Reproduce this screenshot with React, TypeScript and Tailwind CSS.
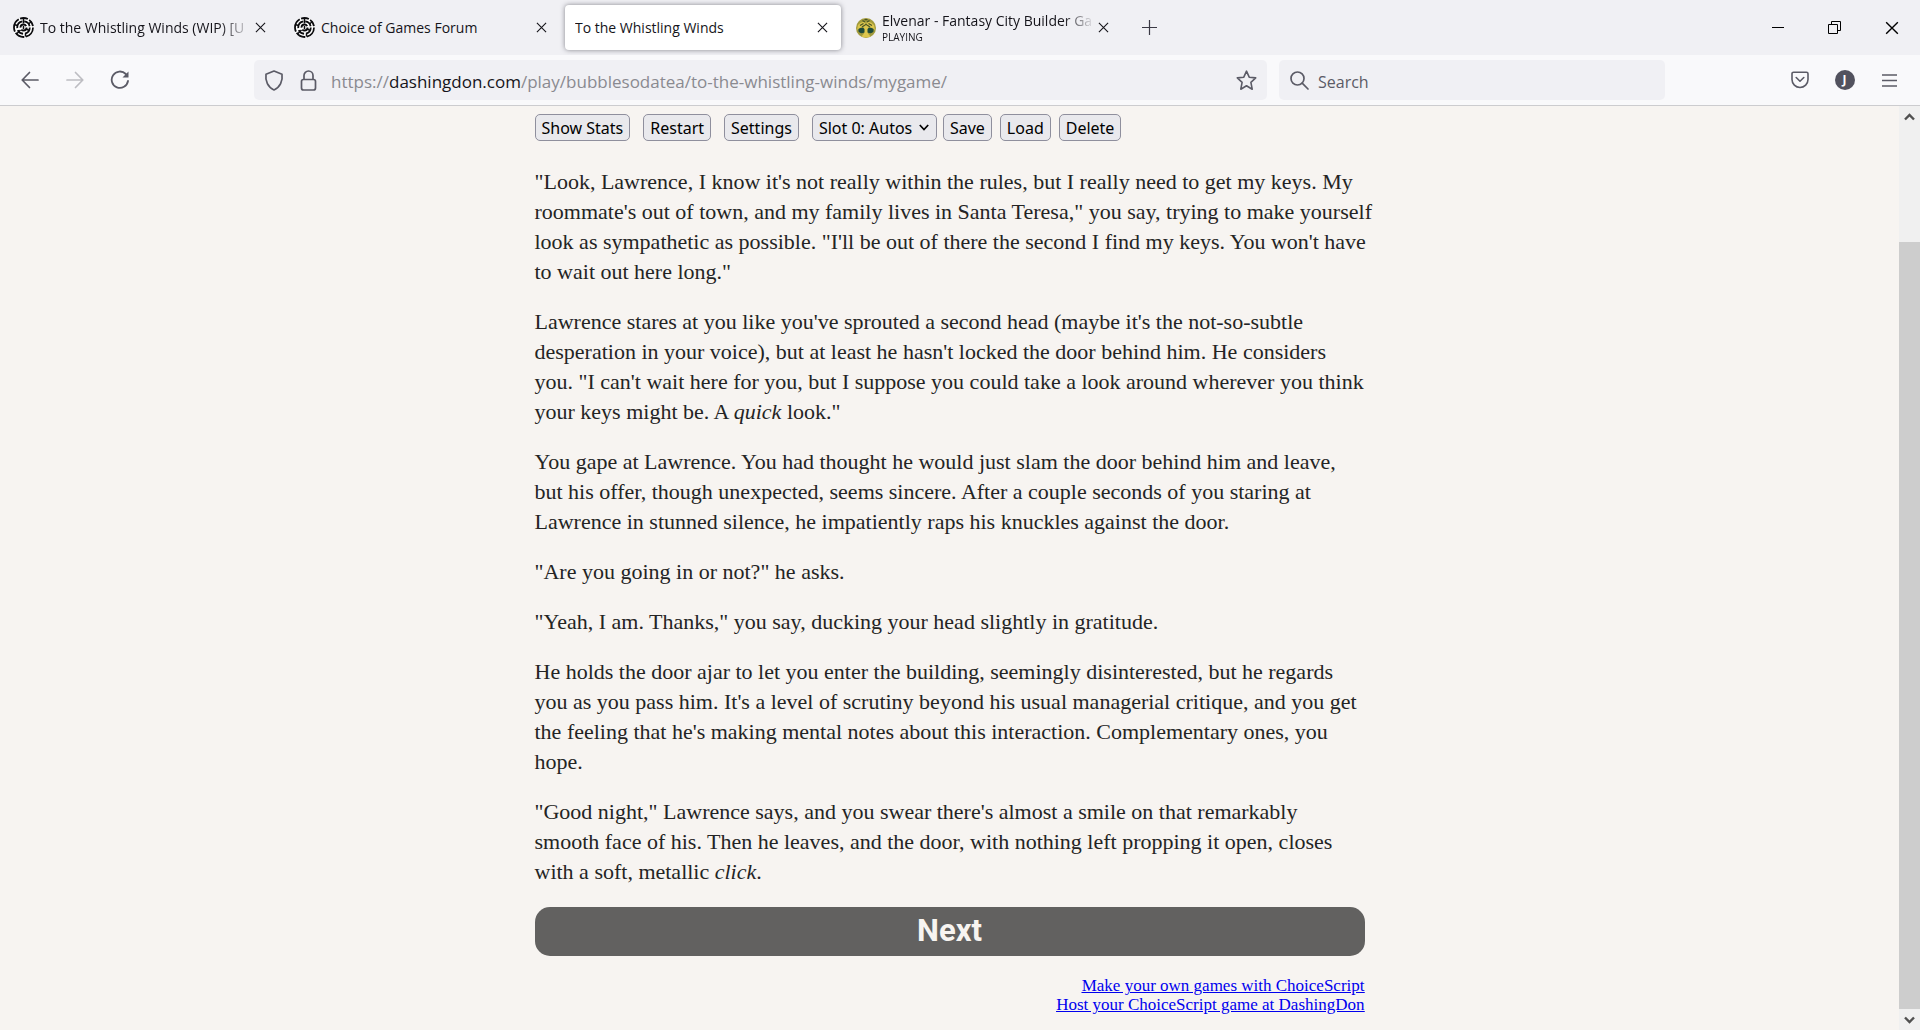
import { useState } from "react";
import clsx from "clsx";

type Tab = {
    id: number;
    title: string;
    icon?: 'choice' | 'elvenar';
    status?: string;
    faded?: boolean;
}

const tabs: Tab[] = [
    { id: 1, title: 'To the Whistling Winds (WIP) [U', icon: 'choice', faded: true },
    { id: 2, title: 'Choice of Games Forum', icon: 'choice' },
    { id: 3, title: 'To the Whistling Winds' },
    { id: 4, title: 'Elvenar - Fantasy City Builder Ga', icon: 'elvenar', status: 'PLAYING', faded: true },
];

const buttonStyle = "h-[27px] px-[6px] rounded-[5px] border border-[#8f8f9d] bg-[#e9e9ed] pt-[2px] text-black whitespace-nowrap cursor-pointer hover:bg-[#d0d0d7]";

function CloseIcon({ size }: { size: number }) {
    return (
        <svg width={size} height={size} viewBox="0 0 12 12" fill="none" stroke="currentColor" strokeWidth="1.2">
            <path d="M1 1L11 11M11 1L1 11" />
        </svg>
    )
}

function ChoiceIcon() {
    return (
        <svg className="shrink-0" width="21" height="21" viewBox="0 0 42 42" fill="none" stroke="#0b0b0e" strokeWidth="3.6">
            <circle cx="21" cy="21" r="21" fill="#fff" stroke="none" />
            <circle cx="21" cy="21" r="19" strokeDasharray="25 3 20 3 28 3 16 3 15 3" />
            <circle cx="21" cy="21" r="12.500" strokeDasharray="16 4 13 4 18 4 15 4" />
            <circle cx="21" cy="21" r="6" strokeDasharray="14 4 16 4" />
            <path d="M21 2V13M31 14L37 9M27 24L32 27M15 26L7 34M25 33V39M9 17L2 15M21 18V24" strokeWidth="3" />
        </svg>
    )
}

function ElvenarIcon() {
    return (
        <svg className="shrink-0" width="20" height="20" viewBox="0 0 40 40">
            <circle cx="20" cy="20" r="20" fill="#a19a3c" />
            <path d="M4 14Q12 4 20 10Q28 4 36 14L38 24Q31 17 24 19L24 31L29 37Q20 41 11 37L16 31L16 19Q9 17 2 24Z" fill="#dcc64d" />
            <path d="M5 22Q13 17 17 22V29Q9 33 5 27ZM35 22Q27 17 23 22V29Q31 33 35 27Z" fill="#1e4a3a" />
            <path d="M8 15L15 11M32 15L25 11M13 5L18 8M27 5L22 8M12 18L18 14M28 18L22 14M17 3H23" stroke="#4a5526" strokeWidth="2.500" />
            <circle cx="20" cy="13" r="2" fill="#4a5526" />
        </svg>
    )
}

function TabBar() {
    const [active, setActive] = useState(3);

    return (
        <header className="flex h-[55px] bg-[#f0f0f4] text-[#15141a]">
            <div className="flex items-center gap-[5px] py-[5px] pl-[3px]">
                {tabs.map(tab => (
                    <div
                        key={tab.id}
                        className={clsx(
                            "flex h-[45px] w-[276px] items-center pr-[11px] pl-[10px]",
                            active === tab.id && "rounded-[4px] bg-white shadow-[0_0_5px_rgba(60,60,70,0.6)]",
                        )}
                    >
                        <button type="button" className="flex min-w-0 flex-1 items-center gap-[6px] text-left" onClick={() => setActive(tab.id)}>
                            {tab.icon === 'choice' && <ChoiceIcon />}
                            {tab.icon === 'elvenar' && <ElvenarIcon />}
                            <span className={clsx("min-w-0 flex-1 overflow-hidden whitespace-nowrap", tab.faded && "[mask-image:linear-gradient(to_left,transparent,black_32px)]")}>
                                <span className="block text-[14px] leading-[18px]">{tab.title}</span>
                                {tab.status && <span className="block text-[10px] leading-[14px]">{tab.status}</span>}
                            </span>
                        </button>
                        <button type="button" aria-label="Close tab" className="flex w-4 shrink-0 justify-center">
                            <CloseIcon size={11} />
                        </button>
                    </div>
                ))}
            </div>
            <button type="button" aria-label="New tab" className="ml-3 flex w-[30px] items-center justify-center">
                <svg width="15" height="15" viewBox="0 0 15 15" stroke="#3a3944" strokeWidth="1.200"><path d="M7.500 0V15M0 7.500H15" /></svg>
            </button>
            <div className="ml-auto flex text-black">
                <button type="button" aria-label="Minimize" className="flex w-[57px] items-center justify-center">
                    <svg width="12" height="12" viewBox="0 0 12 12" stroke="currentColor"><path d="M0 5.500H12" /></svg>
                </button>
                <button type="button" aria-label="Restore" className="flex w-[57px] items-center justify-center">
                    <svg width="13" height="13" viewBox="0 0 13 13" fill="none" stroke="currentColor"><path d="M.5 3.500H9.500V12.500H.5ZM3.500 3.500V.5H12.500V9.500H9.500" /></svg>
                </button>
                <button type="button" aria-label="Close" className="flex w-[57px] items-center justify-center">
                    <CloseIcon size={14} />
                </button>
            </div>
        </header>
    )
}

function NavBar() {
    const [search, setSearch] = useState('');

    return (
        <nav className="flex h-[51px] items-center border-b border-[#cccccf] bg-[#f9f9fb] pr-2 pl-[7px] text-[#5b5b66]">
            <button type="button" aria-label="Back" className="flex w-[45px] justify-center">
                <svg width="18" height="18" viewBox="0 0 18 18" fill="none" stroke="currentColor" strokeWidth="1.700" strokeLinecap="round" strokeLinejoin="round"><path d="M17 9H1.500M8.500 1.500L1.200 9L8.500 16.500" /></svg>
            </button>
            <button type="button" aria-label="Forward" className="flex w-[45px] justify-center text-[#bdbdc2]" disabled>
                <svg width="18" height="18" viewBox="0 0 18 18" fill="none" stroke="currentColor" strokeWidth="1.700" strokeLinecap="round" strokeLinejoin="round"><path d="M1 9H16.500M9.500 1.500L16.800 9L9.500 16.500" /></svg>
            </button>
            <button type="button" aria-label="Reload" className="flex w-[45px] justify-center">
                <svg width="20" height="20" viewBox="0 0 20 20" fill="none" stroke="currentColor" strokeWidth="1.800" strokeLinecap="round"><path d="M15.800 4A8.200 8.200 0 1 0 18 11" /><path d="M18.500 1.500V7.500H12.500Z" fill="currentColor" stroke="none" /></svg>
            </button>
            <div className="w-28" />
            <div className="relative flex h-10 flex-1 items-center rounded-[5px] bg-[#f0f0f4] pr-[10px] pl-[10px]">
                <svg width="20" height="21" viewBox="0 0 20 21" fill="none" stroke="currentColor" strokeWidth="1.700" strokeLinejoin="round"><path d="M10 1L18 4.200C19 11 16 17.500 10 20C4 17.500 1 11 2 4.200Z" /></svg>
                <svg className="ml-4" width="17" height="21" viewBox="0 0 17 21" fill="none" stroke="currentColor" strokeWidth="1.700"><rect x="1.500" y="9.500" width="14" height="10.500" rx="2" /><path d="M4 9.500V5.500A4.500 4.500 0 0 1 13 5.500V9.500" /></svg>
                <label htmlFor="url" className="ml-[14px] flex-1 pt-[3px] whitespace-nowrap text-[17px] text-[#8a8a90]">
                    https://<span className="text-[#15141a]">dashingdon.com</span>/play/bubblesodatea/to-the-whistling-winds/mygame/
                </label>
                <input id="url" type="text" className="absolute inset-y-0 right-12 left-[76px] bg-transparent outline-none" />
                <svg width="21" height="21" viewBox="0 0 21 21" fill="none" stroke="currentColor" strokeWidth="1.600" strokeLinejoin="round"><path d="M10.500 1.200L13.200 7.200L19.700 7.900L14.900 12.300L16.200 19.200L10.500 15.800L4.800 19.200L6.100 12.300L1.300 7.900L7.800 7.200Z" /></svg>
            </div>
            <div className="ml-3 flex h-10 w-[386px] items-center gap-[9px] rounded-[5px] bg-[#f0f0f4] px-[11px]">
                <svg width="19" height="19" viewBox="0 0 19 19" fill="none" stroke="currentColor" strokeWidth="1.700" strokeLinecap="round"><circle cx="7.500" cy="7.500" r="6.500" /><path d="M12.200 12.200L18 18" /></svg>
                <input type="text" aria-label="Search" placeholder="Search" className="min-w-0 flex-1 bg-transparent pt-[3px] text-[16px] outline-none placeholder:text-[#5b5b66]" value={search} onChange={e => setSearch(e.target.value)} />
            </div>
            <div className="w-28" />
            <button type="button" aria-label="Save to Pocket" className="flex w-[45px] justify-center">
                <svg width="18" height="18" viewBox="0 0 18 18" fill="none" stroke="currentColor" strokeWidth="1.600" strokeLinecap="round" strokeLinejoin="round"><path d="M2.500 1.200H15.500A1.500 1.500 0 0 1 17 2.700V8.500A8 8 0 0 1 1 8.500V2.700A1.500 1.500 0 0 1 2.500 1.200Z" /><path d="M5.200 6.500L9 10.200L12.800 6.500" /></svg>
            </button>
            <button type="button" aria-label="Account" className="flex w-[45px] justify-center">
                <span className="flex h-5 w-5 items-center justify-center rounded-full bg-[#52525e] text-[12px] font-bold text-white">J</span>
            </button>
            <button type="button" aria-label="Menu" className="flex w-[45px] justify-center">
                <svg width="15" height="13" viewBox="0 0 15 13" stroke="currentColor" strokeWidth="1.400"><path d="M0 1H15M0 6.500H15M0 12H15" /></svg>
            </button>
        </nav>
    )
}

function GameControls() {
    return (
        <div className="flex font-['Noto_Sans','Open_Sans',sans-serif] text-[16px] leading-[23px]">
            <div className="flex gap-[13px]">
                <button type="button" className={buttonStyle}>Show Stats</button>
                <button type="button" className={buttonStyle}>Restart</button>
                <button type="button" className={buttonStyle}>Settings</button>
            </div>
            <div className="relative ml-[13px]">
                <select aria-label="Save slot" className="h-[27px] w-[125px] appearance-none overflow-hidden rounded-[5px] border border-[#8f8f9d] bg-[#e9e9ed] pt-[2px] pr-6 pl-[6px] text-black">
                    <option>Slot 0: Autosave</option>
                    <option>Slot 1: Empty</option>
                </select>
                <svg className="pointer-events-none absolute top-[10px] right-2" width="10" height="7" viewBox="0 0 10 7" fill="none" stroke="#000" strokeWidth="1.700"><path d="M.8 1L5 5.500L9.200 1" /></svg>
            </div>
            <div className="ml-[6px] flex gap-2">
                <button type="button" className={buttonStyle}>Save</button>
                <button type="button" className={buttonStyle}>Load</button>
                <button type="button" className={buttonStyle}>Delete</button>
            </div>
        </div>
    )
}

function Story() {
    return (
        <div className="mt-[26px] flex flex-col gap-5 text-[22px] leading-[30px] whitespace-nowrap text-[#242424]">
            <p>
                "Look, Lawrence, I know it's not really within the rules, but I really need to get my keys. My<br />
                roommate's out of town, and my family lives in Santa Teresa," you say, trying to make yourself<br />
                look as sympathetic as possible. "I'll be out of there the second I find my keys. You won't have<br />
                to wait out here long."
            </p>
            <p>
                Lawrence stares at you like you've sprouted a second head (maybe it's the not-so-subtle<br />
                desperation in your voice), but at least he hasn't locked the door behind him. He considers<br />
                you. "I can't wait here for you, but I suppose you could take a look around wherever you think<br />
                your keys might be. A <em>quick</em> look."
            </p>
            <p>
                You gape at Lawrence. You had thought he would just slam the door behind him and leave,<br />
                but his offer, though unexpected, seems sincere. After a couple seconds of you staring at<br />
                Lawrence in stunned silence, he impatiently raps his knuckles against the door.
            </p>
            <p>"Are you going in or not?" he asks.</p>
            <p>"Yeah, I am. Thanks," you say, ducking your head slightly in gratitude.</p>
            <p>
                He holds the door ajar to let you enter the building, seemingly disinterested, but he regards<br />
                you as you pass him. It's a level of scrutiny beyond his usual managerial critique, and you get<br />
                the feeling that he's making mental notes about this interaction. Complementary ones, you<br />
                hope.
            </p>
            <p>
                "Good night," Lawrence says, and you swear there's almost a smile on that remarkably<br />
                smooth face of his. Then he leaves, and the door, with nothing left propping it open, closes<br />
                with a soft, metallic <em>click</em>.
            </p>
        </div>
    )
}

function ScrollBar() {
    return (
        <div className="flex w-[21px] shrink-0 flex-col bg-[#f0f0f0] text-[#505050]">
            <div className="flex h-[21px] items-center justify-center">
                <svg width="11" height="8" viewBox="0 0 11 8" fill="none" stroke="currentColor" strokeWidth="2.400"><path d="M1 6.500L5.500 2L10 6.500" /></svg>
            </div>
            <div className="flex flex-1 flex-col justify-end">
                <div className="h-[87%] bg-[#cdcdcd]" />
            </div>
            <div className="flex h-[21px] items-center justify-center">
                <svg width="11" height="8" viewBox="0 0 11 8" fill="none" stroke="currentColor" strokeWidth="2.400"><path d="M1 1.500L5.500 6L10 1.500" /></svg>
            </div>
        </div>
    )
}

export default function App() {
    return (
        <div className="flex h-screen flex-col font-['Open_Sans','Noto_Sans',sans-serif]">
            <TabBar />
            <NavBar />
            <div className="flex min-h-0 flex-1 bg-[#f7f4f1]">
                <main className="min-w-0 flex-1 overflow-hidden">
                    <div className="mx-auto max-w-[830px] pt-2 font-['Liberation_Serif',Georgia,serif]">
                        <GameControls />
                        <Story />
                        <button type="button" className="mt-5 h-[49px] w-full cursor-pointer rounded-[15px] bg-[#626160] font-['Roboto',Arial,sans-serif] text-[31px] font-bold text-[#f7f4f1]">Next</button>
                        <div className="mt-5 flex flex-col items-end text-[17px] leading-[19px] text-[#0000ee] underline">
                            <a href="#choicescript">Make your own games with ChoiceScript</a>
                            <a href="#dashingdon">Host your ChoiceScript game at DashingDon</a>
                        </div>
                    </div>
                </main>
                <ScrollBar />
            </div>
        </div>
    )
}
